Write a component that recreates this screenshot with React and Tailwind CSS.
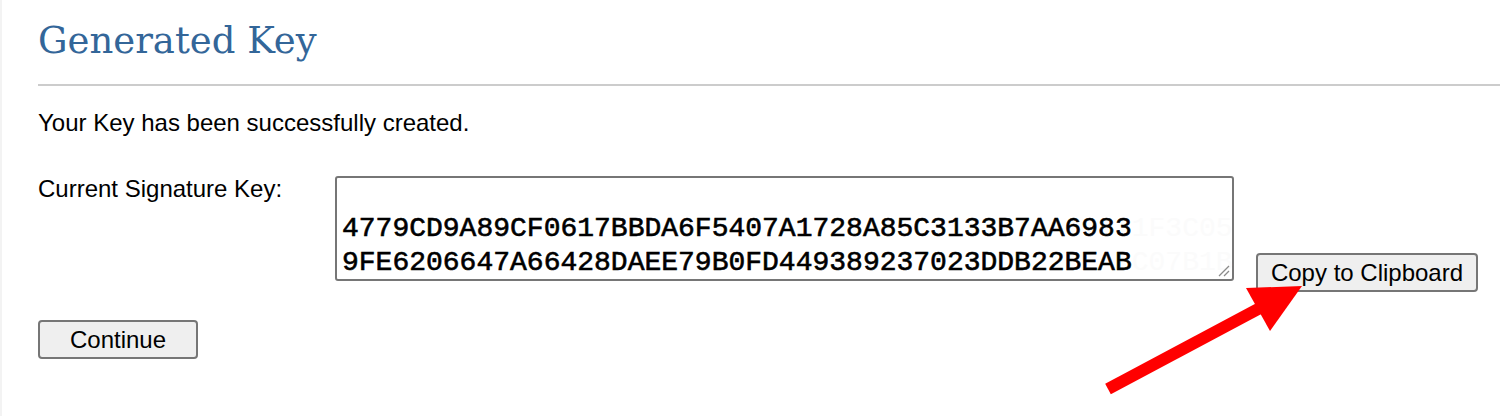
export default function App() {
  return (
    <div className="relative h-[416px] w-full overflow-hidden border-l-2 border-[#f3f3f3] bg-white font-['Liberation_Sans',Arial,sans-serif] text-black">
      <h1 className="ml-[36px] pt-[17px] font-['DejaVu_Serif',Georgia,serif] text-[37px] leading-[48px] text-[#336699]">
        Generated Key
      </h1>
      <div className="ml-[36px] mt-[19px] h-[2px] bg-[#cccccc]" />
      <p className="ml-[36px] mt-[23px] text-[24px] leading-[28px]">Your Key has been successfully created.</p>

      <div className="ml-[36px] mt-[39px] flex items-start">
        <div className="-mt-[2px] w-[297px] pt-[1px] text-[24px] leading-[28px]">Current Signature Key:</div>
        <div className="relative h-[105px] w-[899px] rounded-[3px] border-2 border-[#767676] bg-white pl-[5px] pt-[34px] font-['Liberation_Mono','Courier_New',monospace] text-[28px] leading-[34px] [-webkit-text-stroke:0.6px_black]">
          <div className="whitespace-nowrap">
            4779CD9A89CF0617BBDA6F5407A1728A85C3133B7AA6983
            <span className="text-[#fbfbfb] [-webkit-text-stroke:0]">1F3C05</span>
          </div>
          <div className="whitespace-nowrap">
            9FE6206647A66428DAEE79B0FD449389237023DDB22BEAB
            <span className="text-[#fbfbfb] [-webkit-text-stroke:0]">C07B1B</span>
          </div>
          <svg className="absolute bottom-[2px] right-[2px]" width="14" height="14" viewBox="0 0 14 14">
            <path d="M13 3 L3 13 M13 8 L8 13" stroke="#8a8a8a" strokeWidth="1.3" />
          </svg>
        </div>
        <button className="ml-[22px] mt-[77px] h-[39px] w-[222px] rounded-[4px] border-2 border-[#767676] bg-[#efefef] text-[24px] leading-[28px]">
          Copy to Clipboard
        </button>
      </div>

      <button className="ml-[36px] mt-[28px] h-[39px] w-[160px] rounded-[4px] border-2 border-[#767676] bg-[#efefef] text-[24px] leading-[28px]">
        Continue
      </button>

      <svg className="absolute left-0 top-0" width="1500" height="416" viewBox="0 0 1500 416">
        <line x1="1106" y1="389" x2="1258" y2="308" stroke="#ff0000" strokeWidth="12" />
        <polygon points="1300,286 1244,288 1268,331" fill="#ff0000" />
      </svg>
    </div>
  );
}
